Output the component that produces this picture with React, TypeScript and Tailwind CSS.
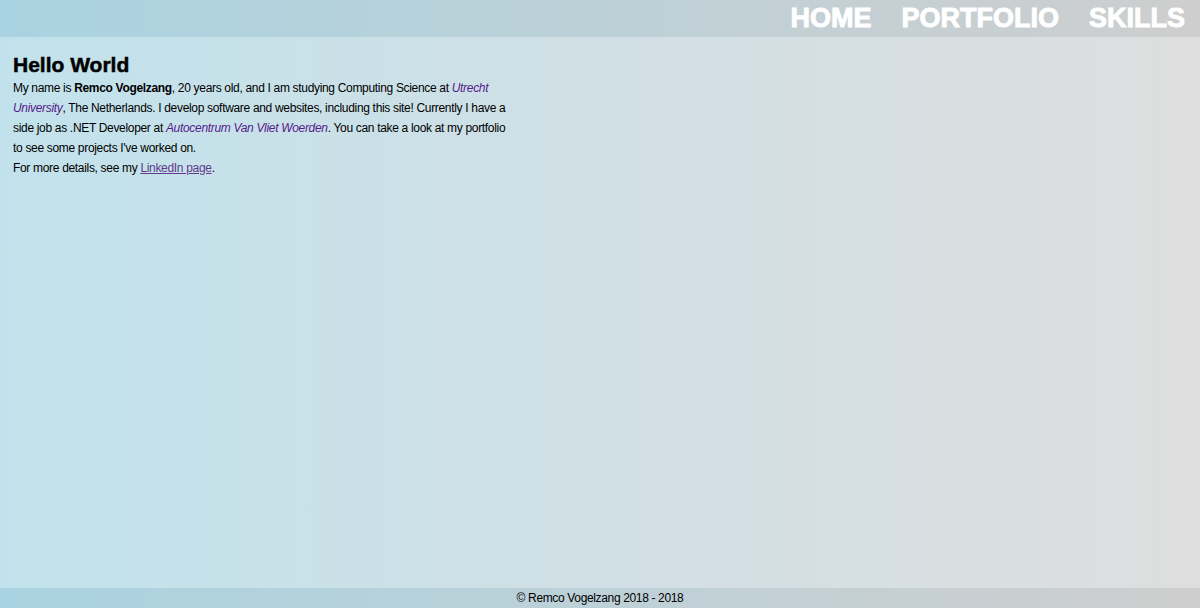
import React from 'react';

const App = () => {
  const links = ["HOME", "PORTFOLIO", "SKILLS"];

  return (
    <div className="min-h-screen flex flex-col bg-gradient-to-r from-[#add8e6] to-[#d3d3d3] text-black font-['Liberation_Sans',Arial,sans-serif]">
      <header className="h-[37px] flex justify-end items-center bg-black/[0.02]">
        <nav className="flex">
          {links.map((link) => (
            <a
              key={link}
              href="#"
              className="px-[15px] text-[27px] leading-[37px] font-bold text-white [-webkit-text-stroke:0.9px_white]"
            >
              {link}
            </a>
          ))}
        </nav>
      </header>

      <main className="flex-1 bg-white/25 px-[13px] pt-[15px]">
        <h1 className="text-[21px] font-bold leading-[25px] mb-[1px] [-webkit-text-stroke:0.5px_black]">Hello World</h1>
        <p className="w-[500px] text-[12px] leading-[20px] tracking-[-0.32px]">
          My name is <b>Remco Vogelzang</b>, 20 years old, and I am studying Computing Science at{' '}
          <i className="text-[#551a8b]">Utrecht University</i>, The Netherlands. I develop software and websites,
          including this site! Currently I have a side job as .NET Developer at{' '}
          <i className="text-[#551a8b]">Autocentrum Van Vliet Woerden</i>. You can take a look at my portfolio to see
          some projects I've worked on.
          <br />
          For more details, see my{' '}
          <a href="#" className="underline text-[#5e3b8c]">LinkedIn page</a>.
        </p>
      </main>

      <footer className="h-[20px] flex items-center justify-center text-[12px] tracking-[-0.35px] bg-black/[0.02]">
        © Remco Vogelzang 2018 - 2018
      </footer>
    </div>
  );
};

export default App;
